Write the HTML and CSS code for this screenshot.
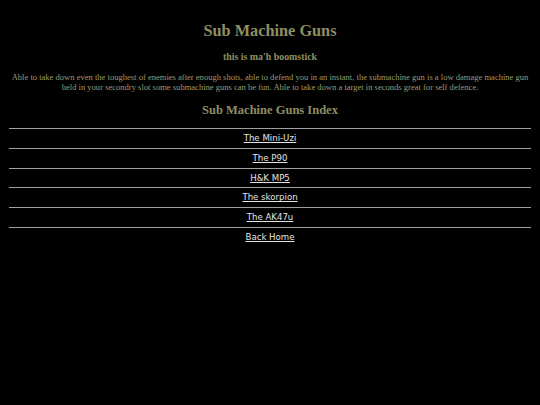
FILE: index.html
```html
<!DOCTYPE html>
<html>
<head>
<meta charset="utf-8">
<title>Sub Machine Guns</title>
<link rel="stylesheet" href="styles.css">
</head>
<body>
<div class="page">
  <h1 class="title">Sub Machine Guns</h1>
  <h2 class="tagline">this is ma'h boomstick</h2>
  <p class="intro">Able to take down even the toughest of enemies after enough shots, able to defend you in an instant, the submachine gun is a low damage machine gun held in your secondry slot some submachine guns can be fun. Able to take down a target in seconds great for self defence.</p>
  <h2 class="index-title">Sub Machine Guns Index</h2>
  <ul class="index">
    <li class="item"><a href="#">The Mini-Uzi</a></li>
    <li class="item"><a href="#">The P90</a></li>
    <li class="item"><a href="#">H&amp;K MP5</a></li>
    <li class="item"><a href="#">The skorpion</a></li>
    <li class="item"><a href="#">The AK47u</a></li>
    <li class="item"><a href="#">Back Home</a></li>
  </ul>
</div>
</body>
</html>
```

FILE: styles.css
```css
html, body {
  margin: 0;
  padding: 0;
  background: #000;
}
.page {
  padding: 0 9px;
  text-align: center;
  font-family: "Liberation Serif", "Times New Roman", serif;
  color: #8f8f62;
}
.title {
  margin: 22px 0 0;
  font-size: 16.3px;
  line-height: 18px;
  font-weight: bold;
}
.tagline {
  margin: 11px 0 0;
  font-size: 9.9px;
  line-height: 12px;
  font-weight: bold;
}
.intro {
  margin: 9px 0 0;
  font-size: 8.55px;
  line-height: 10px;
  color: #9a9a72;
}
.index-title {
  margin: 11px 0 0;
  font-size: 12.5px;
  line-height: 14px;
  font-weight: bold;
}
.index {
  list-style: none;
  margin: 11px 0 0;
  padding: 0;
  font-family: "DejaVu Sans", Verdana, sans-serif;
  font-size: 8.6px;
}
.item {
  border-top: 1px solid #a0a0a0;
  line-height: 10.8px;
  padding: 4px 0;
}
.item a {
  color: #e4e4e4;
}
```
